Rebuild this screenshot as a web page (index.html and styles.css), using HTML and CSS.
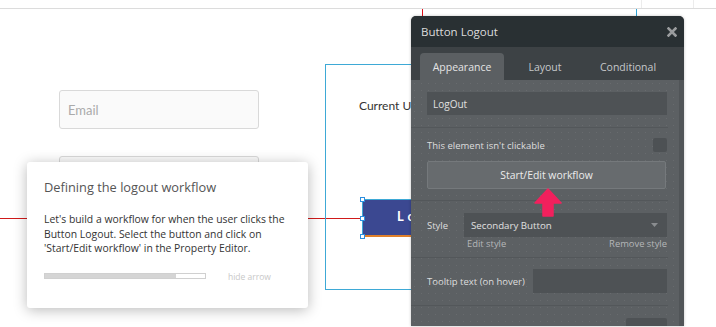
FILE: index.html
```html
<!DOCTYPE html>
<html>
<head>
<meta charset="utf-8">
<link rel="stylesheet" href="styles.css">
</head>
<body>
<div class="topbar">
  <span class="tsep tsep1"></span>
  <span class="tsep tsep2"></span>
</div>
<div class="canvas">
  <div class="guide-v red"></div>
  <div class="guide-v blue"></div>
  <div class="guide-h red-h"></div>

  <div class="field email">Email</div>
  <div class="field pass"></div>

  <div class="group">
    <div class="current">Current User</div>
  </div>

  <div class="btn-logout"><span class="btn-label">Logout</span></div>
  <span class="handle h1"></span>
  <span class="handle h2"></span>
  <span class="handle h3"></span>

  <div class="tip">
    <div class="tip-title">Defining the logout workflow</div>
    <p class="tip-body">Let's build a workflow for when the user clicks the Button Logout. Select the button and click on 'Start/Edit workflow' in the Property Editor.</p>
    <div class="tip-foot">
      <div class="progress"><div class="progress-fill" style="width:82%"></div></div>
      <span class="hide">hide arrow</span>
    </div>
  </div>

  <div class="panel">
    <div class="panel-head">
      <span class="panel-title">Button Logout</span>
      <svg class="close" width="10" height="10" viewBox="0 0 10 10"><path d="M1.5 1.5 L8.5 8.5 M8.5 1.5 L1.5 8.5" stroke="#9a9c9e" stroke-width="2.6" stroke-linecap="square"/></svg>
    </div>
    <div class="tabs">
      <span class="tab active">Appearance</span>
      <span class="tab">Layout</span>
      <span class="tab">Conditional</span>
    </div>
    <div class="content">
      <div class="sec s1">
        <div class="input full">LogOut</div>
      </div>
      <div class="sec s2">
        <div class="row">
          <span class="lbl">This element isn't clickable</span>
          <span class="check"></span>
        </div>
        <div class="wf">Start/Edit workflow</div>
      </div>
      <div class="sec s3">
        <div class="row">
          <span class="lbl">Style</span>
          <div class="select">
            <span>Secondary Button</span>
            <svg width="7" height="4" viewBox="0 0 7 4"><path d="M0 0 H7 L3.5 4 Z" fill="#8a8d90"/></svg>
          </div>
        </div>
        <div class="links"><span>Edit style</span><span>Remove style</span></div>
      </div>
      <div class="sec s4">
        <div class="row">
          <span class="lbl">Tooltip text (on hover)</span>
          <div class="input tt"></div>
        </div>
      </div>
      <div class="sec s5">
        <div class="mini"></div>
      </div>
      <div class="scroll"></div>
    </div>
  </div>

  <svg class="arrow" width="28" height="29" viewBox="0 0 28 29"><path d="M14 1 L27 15 L19 15 L19 28 L9 28 L9 15 L1 15 Z" fill="#f2205d" stroke="#f2205d" stroke-width="1.5" stroke-linejoin="round"/></svg>
</div>
</body>
</html>
```

FILE: styles.css
```css
* { box-sizing: border-box; }
html, body { margin: 0; padding: 0; }
body {
  width: 716px;
  height: 327px;
  overflow: hidden;
  background: #fff;
  font-family: "Open Sans", "Liberation Sans", sans-serif;
  position: relative;
}
.topbar {
  height: 9px;
  border-bottom: 1px solid #dcdcdc;
  position: relative;
}
.tsep { position: absolute; top: 0; width: 1px; height: 8px; background: #ececec; }
.tsep1 { left: 641px; }
.tsep2 { left: 693px; }
.canvas { position: relative; height: 317px; }

.guide-v { position: absolute; top: 0; width: 1px; height: 10px; }
.guide-v.red { left: 422px; background: #e0101a; }
.guide-v.blue { left: 636px; background: #2fa4d6; }
.guide-h { position: absolute; left: 0; top: 209px; width: 365px; height: 1px; background: #d01a1a; }

.field {
  position: absolute;
  left: 59px;
  width: 200px;
  height: 39px;
  border: 1px solid #d9d9d9;
  border-radius: 3px;
  background: #fafafa;
  color: #aaa;
  font-family: Lato, "Open Sans", sans-serif;
  font-size: 13px;
  padding: 11px 0 0 8px;
}
.email { top: 81px; }
.pass { top: 147px; }

.group {
  position: absolute;
  left: 325px;
  top: 55px;
  width: 300px;
  height: 226px;
  border: 1px solid #3ea9d6;
}
.current {
  position: absolute;
  left: 33px;
  top: 33px;
  width: 52px;
  overflow: hidden;
  font-family: Lato, "Open Sans", sans-serif;
  font-size: 12px;
  color: #333;
  white-space: nowrap;
}
.btn-logout {
  position: absolute;
  left: 362px;
  top: 190px;
  width: 52px;
  height: 38px;
  overflow: hidden;
  white-space: nowrap;
  background: #3b4891;
  border: 1px solid #3ea9d6;
  border-right: none;
  border-bottom: 2px solid #e0802a;
  color: #fff;
  font-family: Lato, "Open Sans", sans-serif;
  font-weight: 700;
  font-size: 13px;
  letter-spacing: 4px;
  padding: 8px 0 0 34px;
}
.handle {
  position: absolute;
  left: 360px;
  width: 5px;
  height: 5px;
  background: #fff;
  border: 1px solid #2d8fe0;
}
.h1 { top: 188px; }
.h2 { top: 207px; }
.h3 { top: 225px; }

.tip {
  position: absolute;
  left: 27px;
  top: 153px;
  width: 281px;
  height: 146px;
  background: #fff;
  border-radius: 3px;
  box-shadow: 0 2px 14px rgba(0,0,0,0.28);
  padding: 16px 17px 0 17px;
}
.tip-title { font-size: 12.8px; color: #555; line-height: 18px; }
.tip-body {
  margin: 16px 0 0 0;
  font-size: 10.4px;
  line-height: 14.5px;
  color: #333;
}
.tip-foot {
  display: flex;
  align-items: center;
  margin-top: 15px;
}
.progress {
  width: 162px;
  height: 6px;
  border: 1px solid #d0d0d0;
  background: #fff;
}
.progress-fill { height: 100%; background: #d5d5d5; }
.hide { margin-left: 22px; font-size: 8.5px; color: #c8c8c8; }

.panel {
  position: absolute;
  left: 411px;
  top: 7px;
  width: 273px;
  height: 310px;
  border-radius: 5px 5px 0 0;
  overflow: hidden;
  background: #5c6063;
  box-shadow: 0 0 3px rgba(0,0,0,0.25);
  display: flex;
  flex-direction: column;
}
.panel-head {
  height: 31px;
  background: #293033;
  display: flex;
  align-items: center;
  justify-content: space-between;
  padding: 0 7px 0 10px;
  flex: none;
}
.panel-title { font-size: 11.5px; color: #dcdcdc; }
.close { margin-top: 1px; }
.tabs {
  height: 33px;
  background: #3d4245;
  display: flex;
  align-items: flex-end;
  padding-left: 9px;
  flex: none;
}
.tab {
  height: 27px;
  display: flex;
  align-items: center;
  justify-content: center;
  font-size: 10.5px;
  color: #c6c8ca;
}
.tab:nth-child(1) { width: 84px; }
.tab:nth-child(2) { width: 82px; }
.tab:nth-child(3) { width: 84px; }
.tab.active {
  background: #5b5f62;
  color: #e4e4e4;
  border-radius: 4px 4px 0 0;
}
.content {
  flex: 1;
  position: relative;
  background-color: #5c6063;
  background-image: radial-gradient(rgba(255,255,255,0.07) 0.8px, transparent 1px);
  background-size: 7px 7px;
  padding-right: 16px;
}
.scroll {
  position: absolute;
  right: 0;
  top: 0;
  width: 5px;
  height: 100%;
  background: #515558;
}
.sec {
  padding-left: 16px;
  border-bottom: 1px solid #53575a;
}
.s1 { padding-top: 12px; height: 48px; }
.s2 { padding-top: 8px; height: 73px; }
.s3 { padding-top: 12px; height: 57px; }
.s4 { padding-top: 11px; height: 48px; }
.s5 { padding-top: 12px; border-bottom: none; }
.input {
  height: 23px;
  background: #4e5255;
  color: #e0e0e0;
  font-size: 10px;
  display: flex;
  align-items: center;
  padding-left: 6px;
}
.full { width: 240px; }
.row {
  display: flex;
  align-items: center;
  justify-content: space-between;
  width: 240px;
}
.lbl { font-size: 9.5px; color: #dedede; white-space: nowrap; }
.s2 .row { height: 18px; }
.check {
  width: 14px;
  height: 14px;
  border-radius: 2px;
  background: #4d5154;
}
.wf {
  margin-top: 7px;
  width: 239px;
  height: 28px;
  background: #676b6e;
  border: 1px solid #75797c;
  border-radius: 2px;
  color: #ececec;
  font-size: 10.4px;
  display: flex;
  align-items: center;
  justify-content: center;
}
.select {
  width: 203px;
  height: 24px;
  background: #4e5255;
  color: #e0e0e0;
  font-size: 9.7px;
  display: flex;
  align-items: center;
  justify-content: space-between;
  padding: 0 9px 0 7px;
}
.links {
  width: 240px;
  display: flex;
  justify-content: space-between;
  padding-left: 40px;
  font-size: 9.4px;
  color: #b4b6b8;
  line-height: 14px;
}
.tt { width: 134px; height: 24px; }
.mini {
  margin-left: 199px;
  width: 41px;
  height: 20px;
  background: #4e5255;
  border-radius: 2px;
}
.arrow {
  position: absolute;
  left: 534px;
  top: 179px;
}
```
